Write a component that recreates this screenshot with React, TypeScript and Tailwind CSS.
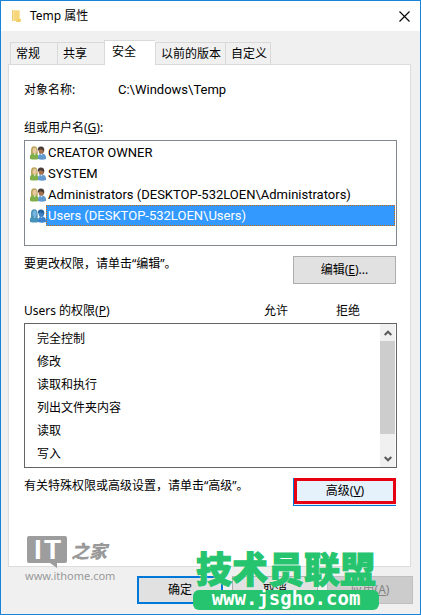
import { useState } from "react";

const GROUPS = [
  { name: "CREATOR OWNER" },
  { name: "SYSTEM" },
  { name: "Administrators (DESKTOP-532LOEN\\Administrators)" },
  { name: "Users (DESKTOP-532LOEN\\Users)" },
];

const PERMISSIONS = ["完全控制", "修改", "读取和执行", "列出文件夹内容", "读取", "写入"];

const TABS = [
  { label: "常规", width: "w-[47px]" },
  { label: "共享", width: "w-[47px]" },
  { label: "安全", width: "w-[51px]" },
  { label: "以前的版本", width: "w-[70px]" },
  { label: "自定义", width: "w-[46px]" },
];

function FolderIcon() {
  return (
    <svg viewBox="0 0 12 14" className="h-[14px] w-3" aria-hidden>
      <path fill="#f9e3a0" d="M1 1h7l1 1v8l1 1v1H1z" />
      <path fill="#eccb72" d="M1 1h1v11H1z" />
      <path fill="#f7d67c" d="M3 2h5v8l-1 2H3z" />
      <path fill="#f3cd68" d="M6 10h4v2l-1 1H5z" />
    </svg>
  );
}

function PeopleIcon({ selected }: { selected: boolean }) {
  return (
    <svg viewBox="0 0 16 14" className="h-[14px] w-4 shrink-0" aria-hidden>
      {/* front figure */}
      <path fill={selected ? "#4f93b9" : "#b9a45c"} d="M1 4q0-3.800 3.200-3.800T7.500 4l.3 4H1z" />
      <ellipse cx="4.600" cy="4.600" rx="2" ry="2.900" fill={selected ? "#74b5e2" : "#e9c9a0"} />
      <path fill={selected ? "#4692b8" : "#7fae4a"} d="M0 13v-3q0-2 2.500-2.500h3.500q2 .5 2.500 2.500V13q-4 1.200-8.500 0z" />
      <path fill={selected ? "#a4d3f2" : "#f5f0dc"} d="M3.500 7.500h2.500l-1.200 1.700z" />
      {/* back figure */}
      <ellipse cx="11.300" cy="4.600" rx="2.700" ry="3.600" fill={selected ? "#3d80bb" : "#a4714c"} />
      <path fill={selected ? "#3a83cf" : "#6299cf"} d="M8 13V11q.3-2.800 2.500-3.200h2.700q2.500.5 2.800 3.200v2q-4 1.600-8 0z" />
      <path fill={selected ? "#20639e" : "#4a3d38"} d="M7.800 4.500Q7.500.5 11 .6t3.300 3.900l-.6 1.500-.7-2-3-.8-1 1z" />
      <path fill={selected ? "#8fc5f0" : "#dbe9f7"} d="M10.300 7.800h2.400l-1.200 1.700z" />
    </svg>
  );
}

function Chevron({ down = false }: { down?: boolean }) {
  return (
    <svg viewBox="0 0 8 6" className="h-[6px] w-2" aria-hidden>
      <path d={down ? "M.7 1 4 4.300 7.300 1" : "M.7 5 4 1.700 7.300 5"} fill="none" stroke="#5a5a5a" strokeWidth="2" />
    </svg>
  );
}

export default function App() {
  const [tab, setTab] = useState(2);
  const [group, setGroup] = useState(3);

  return (
    <div className="relative flex min-h-screen flex-col border border-[#1883d7] bg-[#f0f0f0] font-['Noto_Sans','Noto_Sans_CJK_SC',sans-serif] text-xs leading-4 text-black">
      {/* Title bar */}
      <header className="flex h-[30px] items-center justify-between bg-white pl-[10px] pr-[9px]">
        <div className="flex items-center gap-[7px]">
          <FolderIcon />
          <h1>Temp 属性</h1>
        </div>
        <button type="button" aria-label="关闭" className="flex h-4 w-[13px] items-center justify-center">
          <svg viewBox="0 0 11 11" className="h-[11px] w-[11px]" aria-hidden>
            <path d="m.5.5 10 10m0-10-10 10" stroke="#000" strokeWidth="1.100" />
          </svg>
        </button>
      </header>

      <main className="flex flex-1 flex-col pl-[7px] pr-[9px] pt-[9px]">
        {/* Tabs */}
        <nav role="tablist" className="relative z-10 -mb-px flex items-end pl-[2px]">
          {TABS.map((t, i) => (
            <button
              key={t.label}
              type="button"
              role="tab"
              aria-selected={tab === i}
              onClick={() => setTab(i)}
              className={
                `${t.width} shrink-0 whitespace-nowrap border-l border-t border-[#d9d9d9] text-left last:border-r ` +
                (tab === i ? "h-[25px] bg-white pb-[2px] pl-[7px]" : "h-[23px] border-b bg-[#f0f0f0] pl-[5px]")
              }
            >
              {t.label}
            </button>
          ))}
        </nav>

        {/* Security page */}
        <section className="flex h-[503px] flex-col border border-[#dcdcdc] bg-white pl-[15px] pr-[13px] pt-[17px]">
          <dl className="flex">
            <dt className="w-[94px]">对象名称:</dt>
            <dd className="font-['Roboto',sans-serif] text-[13px] leading-4">C:\Windows\Temp</dd>
          </dl>

          <h2 className="mt-[22px]">组或用户名(<u>G</u>):</h2>
          <ul role="listbox" className="mt-1 h-[106px] border border-[#828790] pl-[5px] pr-px pt-px">
            {GROUPS.map((g, i) => (
              <li key={g.name}>
                <button
                  type="button"
                  role="option"
                  aria-selected={group === i}
                  onClick={() => setGroup(i)}
                  className="flex h-[21px] w-full items-center text-left"
                >
                  <PeopleIcon selected={group === i} />
                  <span
                    className={
                      "flex h-[21px] flex-1 items-center whitespace-nowrap border pl-px font-['Roboto',sans-serif] text-[13px] " +
                      (group === i ? "border-dotted border-[#cc6600] bg-[#3399ff] text-white" : "border-transparent")
                    }
                  >
                    {g.name}
                  </span>
                </button>
              </li>
            ))}
          </ul>

          <div className="mt-[10px] flex justify-between pr-px">
            <p>要更改权限，请单击“编辑”。</p>
            <button type="button" className="h-7 w-[103px] border border-[#adadad] bg-[#e1e1e1]">编辑(<u>E</u>)...</button>
          </div>

          <div className="mt-[19px] flex pr-[37px]">
            <h2 className="flex-1">Users 的权限(<u>P</u>)</h2>
            <span className="w-[72px]">允许</span>
            <span className="w-6">拒绝</span>
          </div>
          <div className="mt-1 flex h-[145px] justify-between border border-[#646464] pr-px">
            <ul className="pl-3 pt-[3px]">
              {PERMISSIONS.map((p) => (
                <li key={p} className="flex h-[23px] items-center">{p}</li>
              ))}
            </ul>
            <div className="flex w-[15px] flex-col bg-[#f0f0f0]">
              <button type="button" aria-label="向上滚动" className="flex h-[17px] items-center justify-center"><Chevron /></button>
              <div className="h-[93px] bg-[#cdcdcd]" />
              <button type="button" aria-label="向下滚动" className="mt-auto flex h-[17px] items-center justify-center"><Chevron down /></button>
            </div>
          </div>

          <div className="mt-[10px] flex justify-between pr-px">
            <p>有关特殊权限或高级设置，请单击“高级”。</p>
            <button type="button" className="h-7 w-[103px] border-b border-l border-[#0078d7] bg-[#e5f1fb] pb-px">
              <span className="flex h-full items-center justify-center border-[3px] border-[#e60012]">
                高级(<u>V</u>)
              </span>
            </button>
          </div>
        </section>

        {/* Dialog buttons */}
        <footer className="flex justify-end gap-[9px] py-[9px]">
          <button type="button" className="h-7 w-[86px] border-2 border-[#0078d7] bg-[#e1e1e1]">确定</button>
          <button type="button" className="h-7 w-[86px] border border-[#adadad] bg-[#e1e1e1]">取消</button>
          <button type="button" disabled className="-mr-[2px] h-7 w-[86px] border border-[#bfbfbf] bg-[#cccccc] text-[#838383]">应用(<u>A</u>)</button>
        </footer>
      </main>

      {/* Site marks over the dialog */}
      <div className="pointer-events-none absolute bottom-[30px] left-6 text-[#999999]">
        <div className="flex items-start gap-1 pl-[2px]">
          <svg viewBox="0 0 40 32" className="h-8 w-10 overflow-visible" aria-hidden>
            <path fill="#9d9d9d" d="M2 0h36q2 0 2 2v23q0 2-2 2h-8v5l-7-5H2q-2 0-2-2V2q0-2 2-2z" />
            <g fill="#fff" fontFamily="Liberation Sans" fontWeight="700" fontSize="28">
              <text x="7" y="23">I</text>
              <text x="17" y="23">T</text>
            </g>
          </svg>
          <span className="font-['Noto_Sans_CJK_SC',sans-serif] text-lg font-black italic leading-7">之家</span>
        </div>
        <p className="text-[11px] leading-4">www.ithome.com</p>
      </div>

      <div className="pointer-events-none absolute bottom-1 left-48 w-[186px] text-center font-black text-[#26c46e]">
        <p className="whitespace-nowrap pb-1 font-['Noto_Sans_CJK_SC',sans-serif] text-4xl leading-[38px] [-webkit-text-stroke:1px_#26c46e] [text-shadow:0_0_2px_#ffffff]">技术员联盟</p>
        <p className="h-5 rounded-md bg-[#26c46e] font-['DejaVu_Sans_Mono',monospace] text-[19px] leading-4 text-white">www.jsgho.com</p>
      </div>
    </div>
  );
}
